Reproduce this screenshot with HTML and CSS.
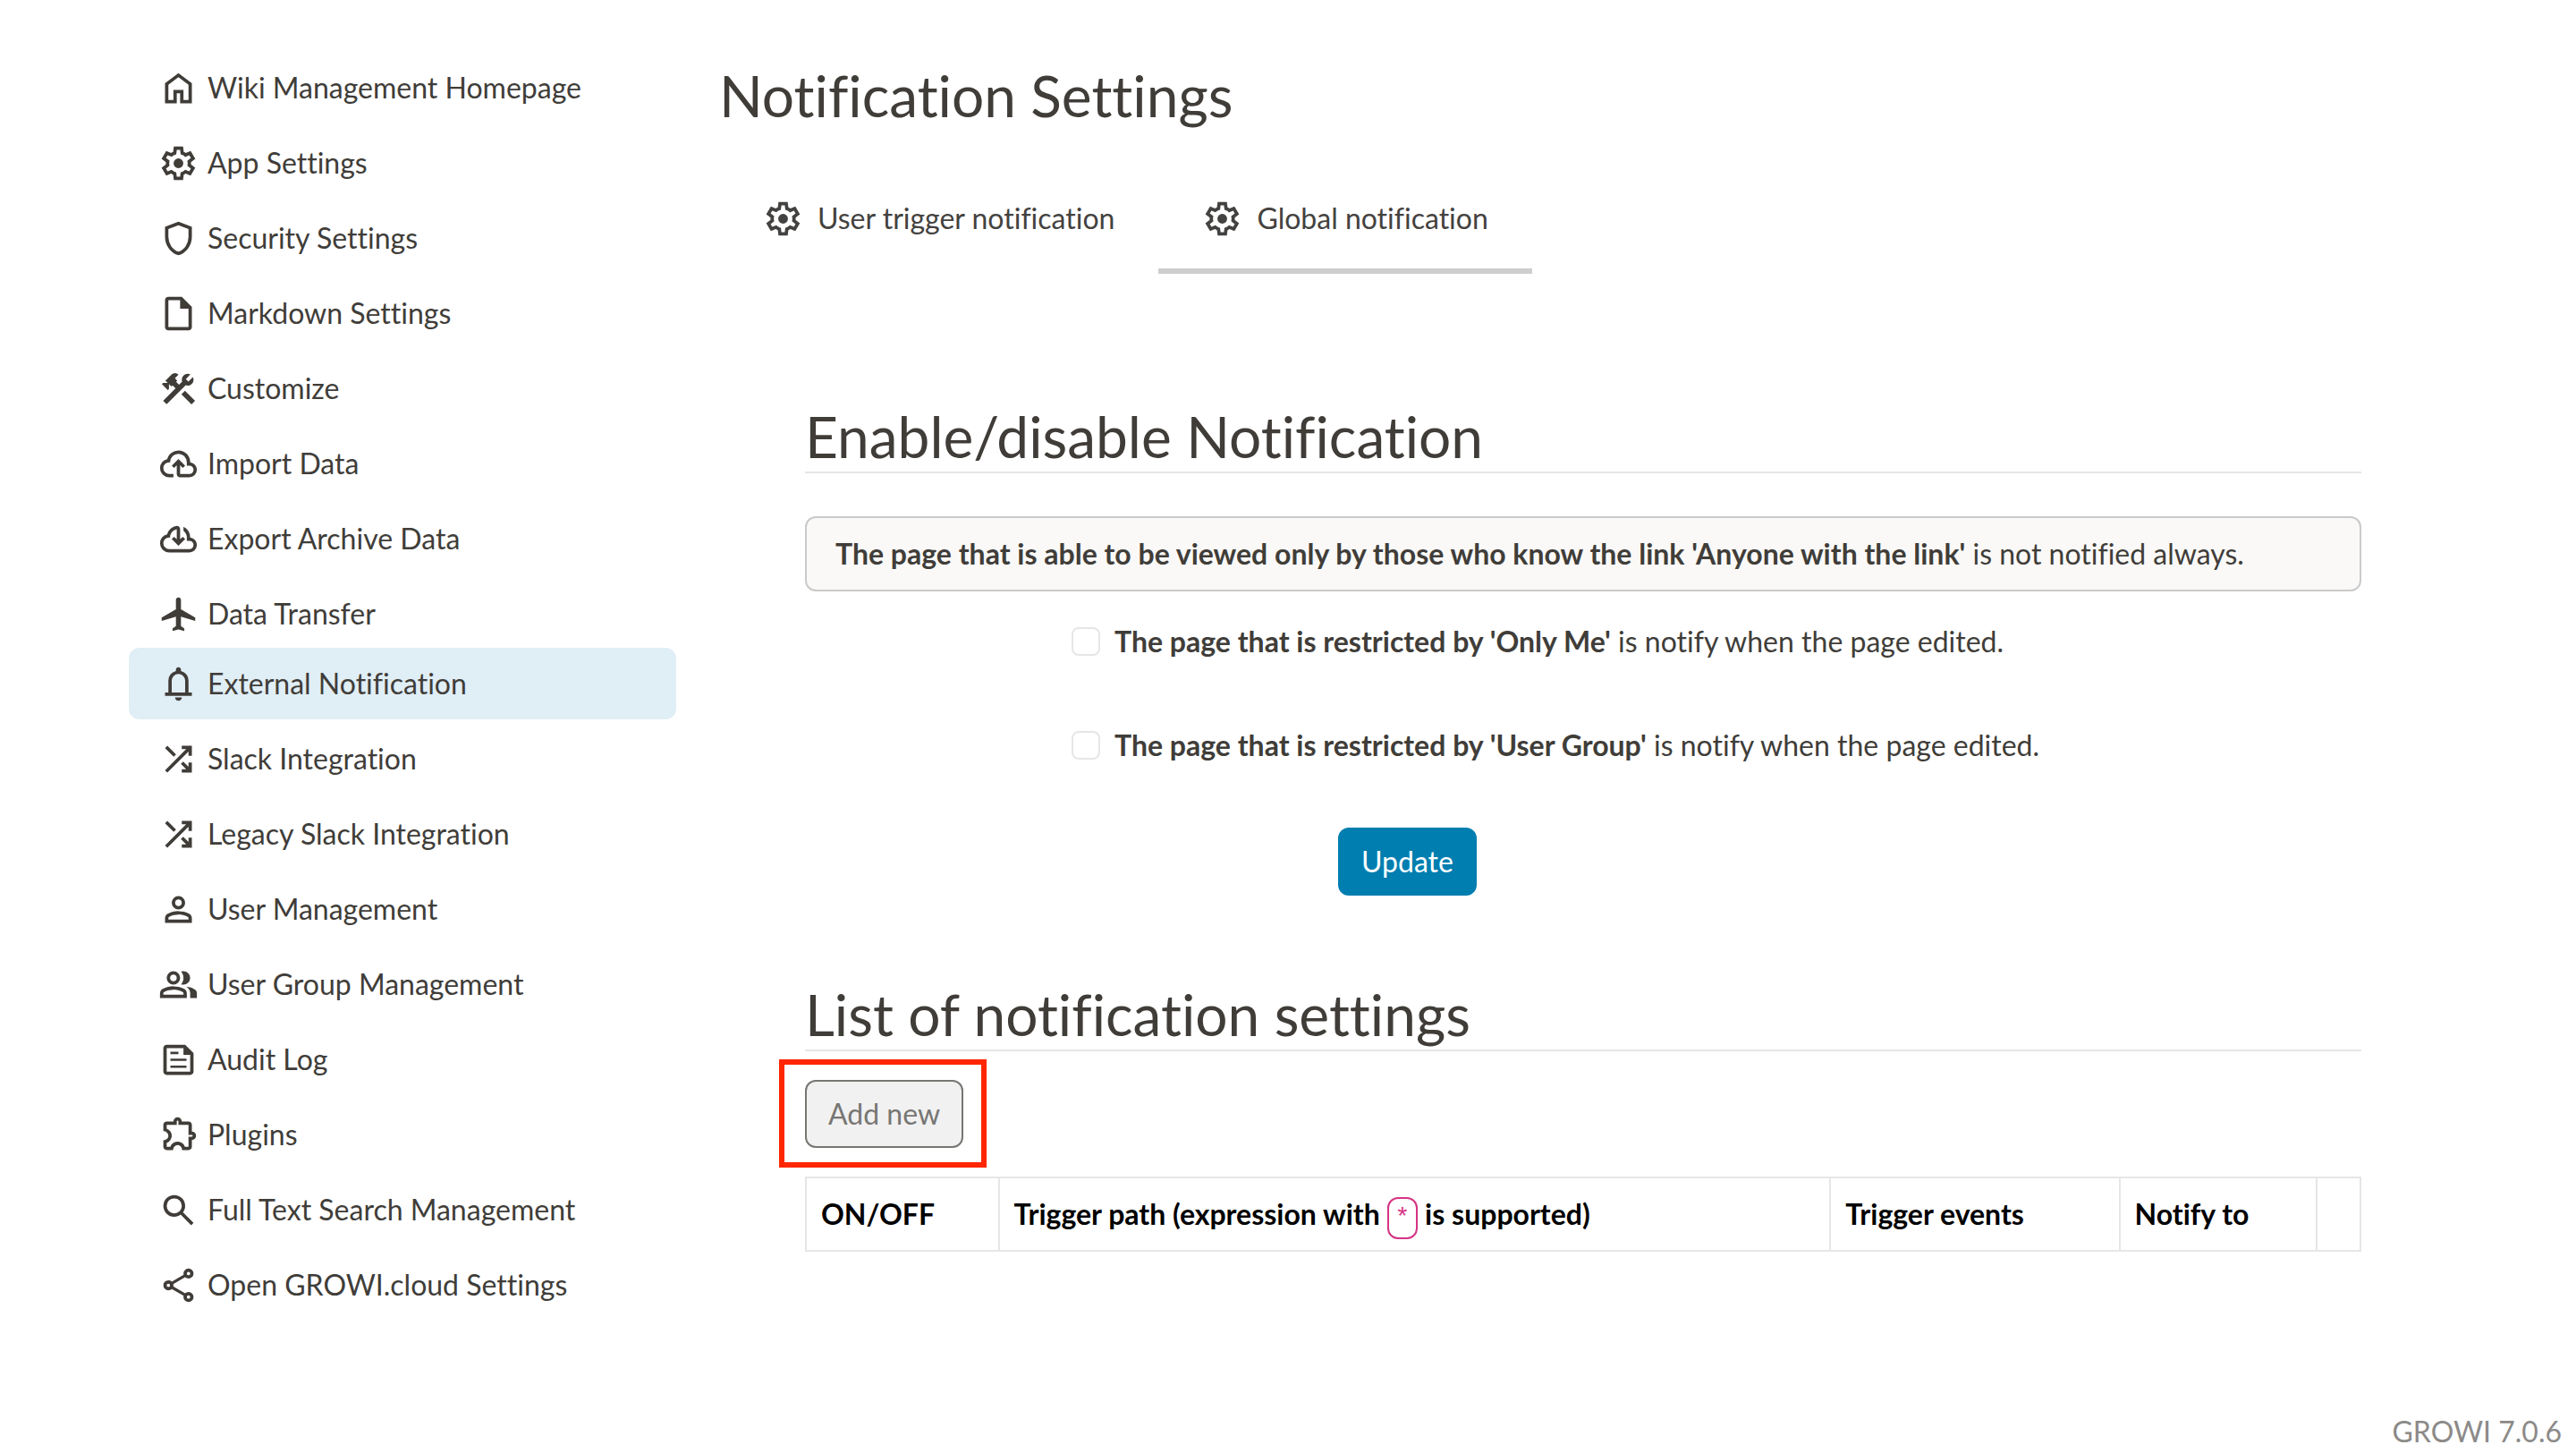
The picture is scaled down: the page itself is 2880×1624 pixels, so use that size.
FILE: index.html
```html
<!DOCTYPE html>
<html lang="en">
<head>
  <meta charset="utf-8">
  <meta name="viewport" content="width=device-width, initial-scale=1">
  <title>Notification Settings - GROWI</title>
  <link rel="stylesheet" href="styles.css">
</head>
<body>
  <svg class="sprite" aria-hidden="true">
    <symbol id="i-home" viewBox="0 0 24 24"><path fill-rule="evenodd" d="M6 19h3v-6h6v6h3v-9l-6-4.5L6 10v9ZM4 21V9l8-6 8 6v12h-7v-6h-2v6H4Z"/></symbol>
    <symbol id="i-settings" viewBox="0 0 24 24"><path fill-rule="evenodd" d="M9.25 22l-.4-3.2q-.325-.125-.612-.3t-.563-.375L4.7 19.375l-2.75-4.75 2.575-1.95Q4.5 12.5 4.5 12.338v-.675q0-.163.025-.338L1.95 9.375l2.75-4.75 2.975 1.25q.275-.2.575-.375t.6-.3l.4-3.2h5.5l.4 3.2q.325.125.613.3t.562.375l2.975-1.25 2.75 4.75-2.575 1.95q.025.175.025.338v.674q0 .163-.05.338l2.575 1.95-2.75 4.75-2.95-1.25q-.275.2-.575.375t-.6.3l-.4 3.2H9.25ZM11 20h1.975l.35-2.65q.775-.2 1.438-.588t1.212-.937l2.475 1.025.975-1.7-2.15-1.625q.125-.35.175-.738T17.5 12t-.05-.788-.175-.737l2.15-1.625-.975-1.7-2.475 1.05q-.55-.575-1.212-.963t-1.438-.587L13 4h-1.975l-.35 2.65q-.775.2-1.437.588t-1.213.937L5.55 7.15l-.975 1.7 2.15 1.6q-.125.375-.175.75t-.05.8q0 .4.05.775t.175.75l-2.15 1.625.975 1.7 2.475-1.05q.55.575 1.213.963t1.437.587L11 20Z"/><circle cx="12" cy="12" r="2.9"/></symbol>
    <symbol id="i-shield" viewBox="0 0 24 24"><path fill-rule="evenodd" d="M12 22q-3.475-.875-5.738-3.988T4 11.1V5l8-3 8 3v6.1q0 3.8-2.262 6.912T12 22Zm0-2.1q2.6-.825 4.3-3.3t1.7-5.5V6.375l-6-2.25-6 2.25V11.1q0 3.025 1.7 5.5t4.3 3.3Z"/></symbol>
    <symbol id="i-note" viewBox="0 0 24 24"><path fill-rule="evenodd" d="M6 22q-.825 0-1.413-.588T4 20V4q0-.825.588-1.413T6 2h8l6 6v12q0 .825-.588 1.413T18 22H6Zm7-13V4H6v16h12V9h-5Z"/></symbol>
    <symbol id="i-construction" viewBox="0 0 24 24"><path d="M13.78 15.3l6 6 2.11-2.16-6-6zM17.5 10.1c-.39 0-.81-.05-1.14-.19L4.97 21.25l-2.11-2.11 7.41-7.4-1.78-1.78-.71.7-1.43-1.4v2.86l-.7.7-3.52-3.56.7-.7h2.81l-1.4-1.41 3.56-3.56a2.976 2.976 0 0 1 4.22 0L9.89 5.74l1.41 1.4-.71.71 1.79 1.78 1.82-1.88c-.14-.33-.2-.75-.2-1.12a3.49 3.49 0 0 1 3.5-3.52c.59 0 1.11.14 1.58.42L16.41 6.2l1.5 1.5 2.67-2.67c.28.47.42.97.42 1.6 0 1.92-1.55 3.47-3.5 3.47z"/></symbol>
    <symbol id="i-cloud-up" viewBox="0 0 24 24"><path d="M6.5 20q-2.275 0-3.888-1.575T1 14.575q0-1.95 1.175-3.475T5.25 9.15q.625-2.3 2.5-3.725T12 4q2.925 0 4.963 2.038T19 11q1.725.2 2.863 1.488T23 15.5q0 1.875-1.313 3.188T18.5 20H13q-.825 0-1.413-.588T11 18v-5.15L9.4 14.4 8 13l4-4 4 4-1.4 1.4-1.6-1.55V18h5.5q1.05 0 1.775-.725T21 15.5t-.725-1.775T18.5 13H17v-2q0-2.075-1.463-3.538T12 6 8.463 7.463 7 11h-.5q-1.45 0-2.475 1.025T3 14.5t1.025 2.475T6.5 18H9v2H6.5Z"/></symbol>
    <symbol id="i-cloud-down" viewBox="0 0 24 24"><path d="M6.5 20q-2.275 0-3.888-1.575T1 14.575q0-1.95 1.175-3.475T5.25 9.15q.575-2.025 2.138-3.4T11 4.075q.825 0 1.413.588T13 6.075v6.1l1.6-1.55L16 12l-4 4-4-4 1.4-1.4 1.6 1.55V6.075q-1.9.35-2.95 1.838T7 11h-.5q-1.45 0-2.475 1.025T3 14.5t1.025 2.475T6.5 18h12q1.05 0 1.775-.725T21 15.5t-.725-1.775T18.5 13H17v-2q0-1.2-.55-2.238T15 7V4.675q1.85.875 2.925 2.588T19 11q1.725.2 2.863 1.488T23 15.5q0 1.875-1.313 3.188T18.5 20h-12Z"/></symbol>
    <symbol id="i-flight" viewBox="0 0 24 24"><path d="M22 16v-2l-8.5-5V3.5c0-.83-.67-1.5-1.5-1.5s-1.5.67-1.5 1.5V9L2 14v2l8.5-2.5V19L8.5 20.5V22l3.5-1 3.5 1v-1.5L13.5 19v-5.5L22 16z"/></symbol>
    <symbol id="i-bell" viewBox="0 0 24 24"><path fill-rule="evenodd" d="M4 19v-2h2v-7q0-2.075 1.25-3.688T10.5 4.2v-.7q0-.625.438-1.063T12 2t1.063.438T13.5 3.5v.7q2 .5 3.25 2.113T18 10v7h2v2H4Zm8 3q-.825 0-1.413-.588T10 20h4q0 .825-.588 1.413T12 22Zm-4-5h8v-7q0-1.65-1.175-2.825T12 6 9.175 7.175 8 10v7Z"/></symbol>
    <symbol id="i-shuffle" viewBox="0 0 24 24"><path d="M14 20v-2h2.6l-3.175-3.175L14.85 13.4 18 16.55V14h2v6h-6Zm-8.6 0L4 18.6 16.6 6H14V4h6v6h-2V7.4L5.4 20Zm3.775-9.425L4 5.4 5.4 4l5.175 5.175-1.4 1.4Z"/></symbol>
    <symbol id="i-person" viewBox="0 0 24 24"><path fill-rule="evenodd" d="M12 12q-1.65 0-2.825-1.175T8 8t1.175-2.825T12 4t2.825 1.175T16 8t-1.175 2.825T12 12Zm-8 8v-2.8q0-.85.438-1.563T5.6 14.55q1.55-.775 3.15-1.163T12 13t3.25.388 3.15 1.162q.725.375 1.163 1.088T20 17.2V20H4Zm2-2h12v-.8q0-.275-.138-.5t-.362-.35q-1.35-.675-2.725-1.013T12 15t-2.775.338T6.5 16.35q-.225.125-.363.35T6 17.2v.8Zm6-8q.825 0 1.413-.588T14 8t-.588-1.413T12 6t-1.413.588T10 8t.588 1.413T12 10Z"/></symbol>
    <symbol id="i-group" viewBox="0 0 24 24"><path fill-rule="evenodd" d="M1 20v-2.8q0-.85.438-1.563T2.6 14.55q1.55-.775 3.15-1.163T9 13t3.25.388 3.15 1.162q.725.375 1.163 1.088T17 17.2V20H1Zm18 0v-3q0-1.1-.613-2.113T16.65 13.15q1.275.15 2.4.513t2.1.887q.9.5 1.375 1.112T23 17v3h-4ZM9 12q-1.65 0-2.825-1.175T5 8t1.175-2.825T9 4t2.825 1.175T13 8t-1.175 2.825T9 12Zm10-4q0 1.65-1.175 2.825T15 12q-.275 0-.7-.063t-.7-.137q.675-.8 1.038-1.775T15 8t-.363-2.025T13.6 4.2q.35-.125.7-.163T15 4q1.65 0 2.825 1.175T19 8ZM3 18h12v-.8q0-.275-.138-.5t-.362-.35q-1.35-.675-2.725-1.013T9 15t-2.775.338T3.5 16.35q-.225.125-.363.35T3 17.2v.8Zm6-8q.825 0 1.413-.588T11 8t-.588-1.413T9 6t-1.413.588T7 8t.588 1.413T9 10Z"/></symbol>
    <symbol id="i-feed" viewBox="0 0 24 24"><path fill-rule="evenodd" d="M5 21q-.825 0-1.413-.588T3 19V5q0-.825.588-1.413T5 3h11l5 5v11q0 .825-.588 1.413T19 21H5Zm0-2h14V9h-4V5H5v14ZM7.2 16.8h9.6v-1.4H7.2v1.4Zm0-8.2H12V7.2H7.2v1.4Zm0 4.1h9.6v-1.4H7.2v1.4Z"/></symbol>
    <symbol id="i-extension" viewBox="0 0 24 24"><path fill-rule="evenodd" d="M8.8 21H5q-.825 0-1.413-.588T3 19v-3.8q1.2 0 2.1-.763T6 12.5t-.9-1.938T3 9.8V6q0-.825.588-1.413T5 4h4q0-1.05.725-1.775T11.5 1.5t1.775.725T14 4h4q.825 0 1.413.588T20 6v4q1.05 0 1.775.725t.725 1.775-.725 1.775T20 15v4q0 .825-.588 1.413T18 21h-3.8q0-1.25-.788-2.125T11.5 18t-1.913.875T8.8 21ZM5 19h2.125q.6-1.65 1.925-2.325T11.5 16t2.45.675T15.875 19H18v-6h2q.2 0 .35-.15t.15-.35-.15-.35T20 12h-2V6h-6V4q0-.2-.15-.35t-.35-.15-.35.15T11 4v2H5v2.2q1.35.5 2.175 1.675T8 12.5q0 1.425-.825 2.6T5 16.8V19Z"/></symbol>
    <symbol id="i-search" viewBox="0 0 24 24"><path fill-rule="evenodd" d="m19.6 21-6.3-6.3q-.75.6-1.725.95T9.5 16q-2.725 0-4.612-1.888T3 9.5t1.888-4.612T9.5 3t4.613 1.888T16 9.5q0 1.1-.35 2.075T14.7 13.3l6.3 6.3-1.4 1.4ZM9.5 14q1.875 0 3.188-1.313T14 9.5t-1.313-3.187T9.5 5 6.313 6.313 5 9.5t1.313 3.188T9.5 14Z"/></symbol>
    <symbol id="i-share" viewBox="0 0 24 24"><path fill-rule="evenodd" d="M18 22q-1.25 0-2.125-.875T15 19q0-.175.025-.363t.075-.337l-7.05-4.1q-.425.375-.95.588T6 15q-1.25 0-2.125-.875T3 12t.875-2.125T6 9q.575 0 1.1.213t.95.587l7.05-4.1q-.05-.15-.075-.337T15 5q0-1.25.875-2.125T18 2t2.125.875T21 5t-.875 2.125T18 8q-.575 0-1.1-.213t-.95-.587L8.9 11.3q.05.15.075.338T9 12t-.025.363-.075.337l7.05 4.1q.425-.375.95-.588T18 16q1.25 0 2.125.875T21 19t-.875 2.125T18 22ZM18 20a1 1 0 1 0 0-2 1 1 0 0 0 0 2ZM6 13a1 1 0 1 0 0-2 1 1 0 0 0 0 2ZM18 6a1 1 0 1 0 0-2 1 1 0 0 0 0 2Z"/></symbol>
  </svg>

  <div class="layout">
    <nav class="sidebar" aria-label="Administration">
      <a class="nav-item" href="#"><svg class="icon"><use href="#i-home"/></svg>Wiki Management Homepage</a>
      <a class="nav-item" href="#"><svg class="icon"><use href="#i-settings"/></svg>App Settings</a>
      <a class="nav-item" href="#"><svg class="icon"><use href="#i-shield"/></svg>Security Settings</a>
      <a class="nav-item" href="#"><svg class="icon"><use href="#i-note"/></svg>Markdown Settings</a>
      <a class="nav-item" href="#"><svg class="icon"><use href="#i-construction"/></svg>Customize</a>
      <a class="nav-item" href="#"><svg class="icon"><use href="#i-cloud-up"/></svg>Import Data</a>
      <a class="nav-item" href="#"><svg class="icon"><use href="#i-cloud-down"/></svg>Export Archive Data</a>
      <a class="nav-item" href="#"><svg class="icon"><use href="#i-flight"/></svg>Data Transfer</a>
      <a class="nav-item active" href="#" aria-current="page"><svg class="icon"><use href="#i-bell"/></svg>External Notification</a>
      <a class="nav-item" href="#"><svg class="icon"><use href="#i-shuffle"/></svg>Slack Integration</a>
      <a class="nav-item" href="#"><svg class="icon"><use href="#i-shuffle"/></svg>Legacy Slack Integration</a>
      <a class="nav-item" href="#"><svg class="icon"><use href="#i-person"/></svg>User Management</a>
      <a class="nav-item" href="#"><svg class="icon"><use href="#i-group"/></svg>User Group Management</a>
      <a class="nav-item" href="#"><svg class="icon"><use href="#i-feed"/></svg>Audit Log</a>
      <a class="nav-item" href="#"><svg class="icon"><use href="#i-extension"/></svg>Plugins</a>
      <a class="nav-item" href="#"><svg class="icon"><use href="#i-search"/></svg>Full Text Search Management</a>
      <a class="nav-item" href="#"><svg class="icon"><use href="#i-share"/></svg>Open GROWI.cloud Settings</a>
    </nav>

    <main class="main">
      <h1 class="title">Notification Settings</h1>
      <div class="tabs">
        <a class="tab" href="#"><svg class="icon"><use href="#i-settings"/></svg>User trigger notification</a>
        <a class="tab current" href="#"><svg class="icon"><use href="#i-settings"/></svg>Global notification</a>
      </div>

      <div class="panel">
        <h2 class="section-title">Enable/disable Notification</h2>
        <p class="notice"><strong>The page that is able to be viewed only by those who know the link 'Anyone with the link'</strong> is not notified always.</p>
        <form class="form">
          <div class="check">
            <input class="checkbox" type="checkbox" id="only-me">
            <label for="only-me"><strong>The page that is restricted by 'Only Me'</strong> is notify when the page edited.</label>
          </div>
          <div class="check">
            <input class="checkbox" type="checkbox" id="user-group">
            <label for="user-group"><strong>The page that is restricted by 'User Group'</strong> is notify when the page edited.</label>
          </div>
          <div class="submit"><button class="btn btn-primary" type="button">Update</button></div>
        </form>

        <h2 class="section-title">List of notification settings</h2>
        <div class="actions"><button class="btn btn-outline" type="button">Add new</button></div>
        <table class="list">
          <colgroup><col class="col-toggle"><col class="col-path"><col class="col-events"><col class="col-notify"><col class="col-menu"></colgroup>
          <thead>
            <tr><th>ON/OFF</th><th>Trigger path (expression with <code class="code">*</code> is supported)</th><th>Trigger events</th><th>Notify to</th><th></th></tr>
          </thead>
        </table>
      </div>
    </main>
  </div>
  <footer class="version">GROWI 7.0.6</footer>
</body>
</html>
```
FILE: styles.css
```css
* { box-sizing: border-box; }

body {
  margin: 0;
  min-height: 100vh;
  display: flex;
  flex-direction: column;
  background: #fff;
  color: #403d39;
  font-family: Lato, "Liberation Sans", sans-serif;
  font-size: 32px;
  line-height: 48px;
  font-variant-ligatures: none;
}

h1, h2, p { margin: 0; }
a { color: inherit; text-decoration: none; }

.sprite { position: absolute; width: 0; height: 0; }

.icon {
  width: 45px;
  height: 45px;
  flex: none;
  fill: currentColor;
}

.layout {
  display: grid;
  grid-template-columns: 612px minmax(0, 1fr);
  gap: 48px;
  padding: 58px 144px 0;
}

/* Side navigation */
.sidebar {
  display: flex;
  flex-direction: column;
  gap: 4px;
}

.nav-item {
  display: flex;
  align-items: center;
  gap: 10px;
  padding: 16px 33px;
  border-radius: 12px;
}

.nav-item.active {
  margin-top: -6px;
  background: #e0eef6;
}

/* Heading and tabs */
.main { padding-top: 10px; }

.title, .section-title {
  font-size: 64px;
  font-weight: 400;
  line-height: 77px;
}

.tabs {
  display: flex;
  margin-top: 37px;
  color: #444240;
}

.tab {
  display: flex;
  align-items: center;
  gap: 16px;
  padding: 38px 49px 32px;
  border-bottom: 6px solid transparent;
}

.tab.current { border-bottom-color: #cfcecd; }

/* Settings panel */
.panel { padding: 143px 96px 0; }

.section-title {
  padding-bottom: 1px;
  border-bottom: 2px solid #e6e6e6;
}

.notice {
  margin-top: 48px;
  padding: 16px 32px;
  border: 2px solid #cacaca;
  border-radius: 12px;
  background: #faf9f7;
}

/* 12-column row with 24px gutters */
.form { margin: 32px -24px 94px; }

.check {
  display: flex;
  align-items: center;
  gap: 16px;
  margin-bottom: 68px;
  padding-left: calc(100% / 6 + 24px);
}

.checkbox {
  appearance: none;
  flex: none;
  width: 32px;
  height: 32px;
  margin: 0;
  border: 2px solid #e6e6e6;
  border-radius: 8px;
  background: #fff;
}

.submit { padding-left: calc(100% / 3 + 24px); }

.btn {
  display: block;
  padding: 12px 24px;
  border: 2px solid;
  border-radius: 12px;
  font: inherit;
}

.btn-primary {
  border-color: #007eb0;
  background: #007eb0;
  color: #fff;
}

.btn-outline {
  border-color: #777673;
  background: #f1f1f1;
  color: #777673;
}

.actions {
  width: max-content;
  margin: 9px 0 10px -29px;
  padding: 17px 20px 16px 23px;
  border: 6px solid #ff2600;
}

/* Notification list */
.list {
  width: 100%;
  table-layout: fixed;
  border-collapse: collapse;
}

.col-toggle { width: 12.4%; }
.col-path { width: 53.5%; }
.col-events { width: 18.6%; }
.col-notify { width: 12.7%; }
.col-menu { width: 2.8%; }

.list th {
  padding: 16px;
  border: 2px solid #e6e6e6;
  color: #000;
  text-align: left;
}

.code {
  padding: 6px 7px;
  border: 2px solid #d63384;
  border-radius: 12px;
  color: #d63384;
  font: 400 28px "Liberation Mono", monospace;
}

.version {
  margin-top: auto;
  padding: 0 16px;
  color: #8c8a88;
  text-align: right;
}
```
